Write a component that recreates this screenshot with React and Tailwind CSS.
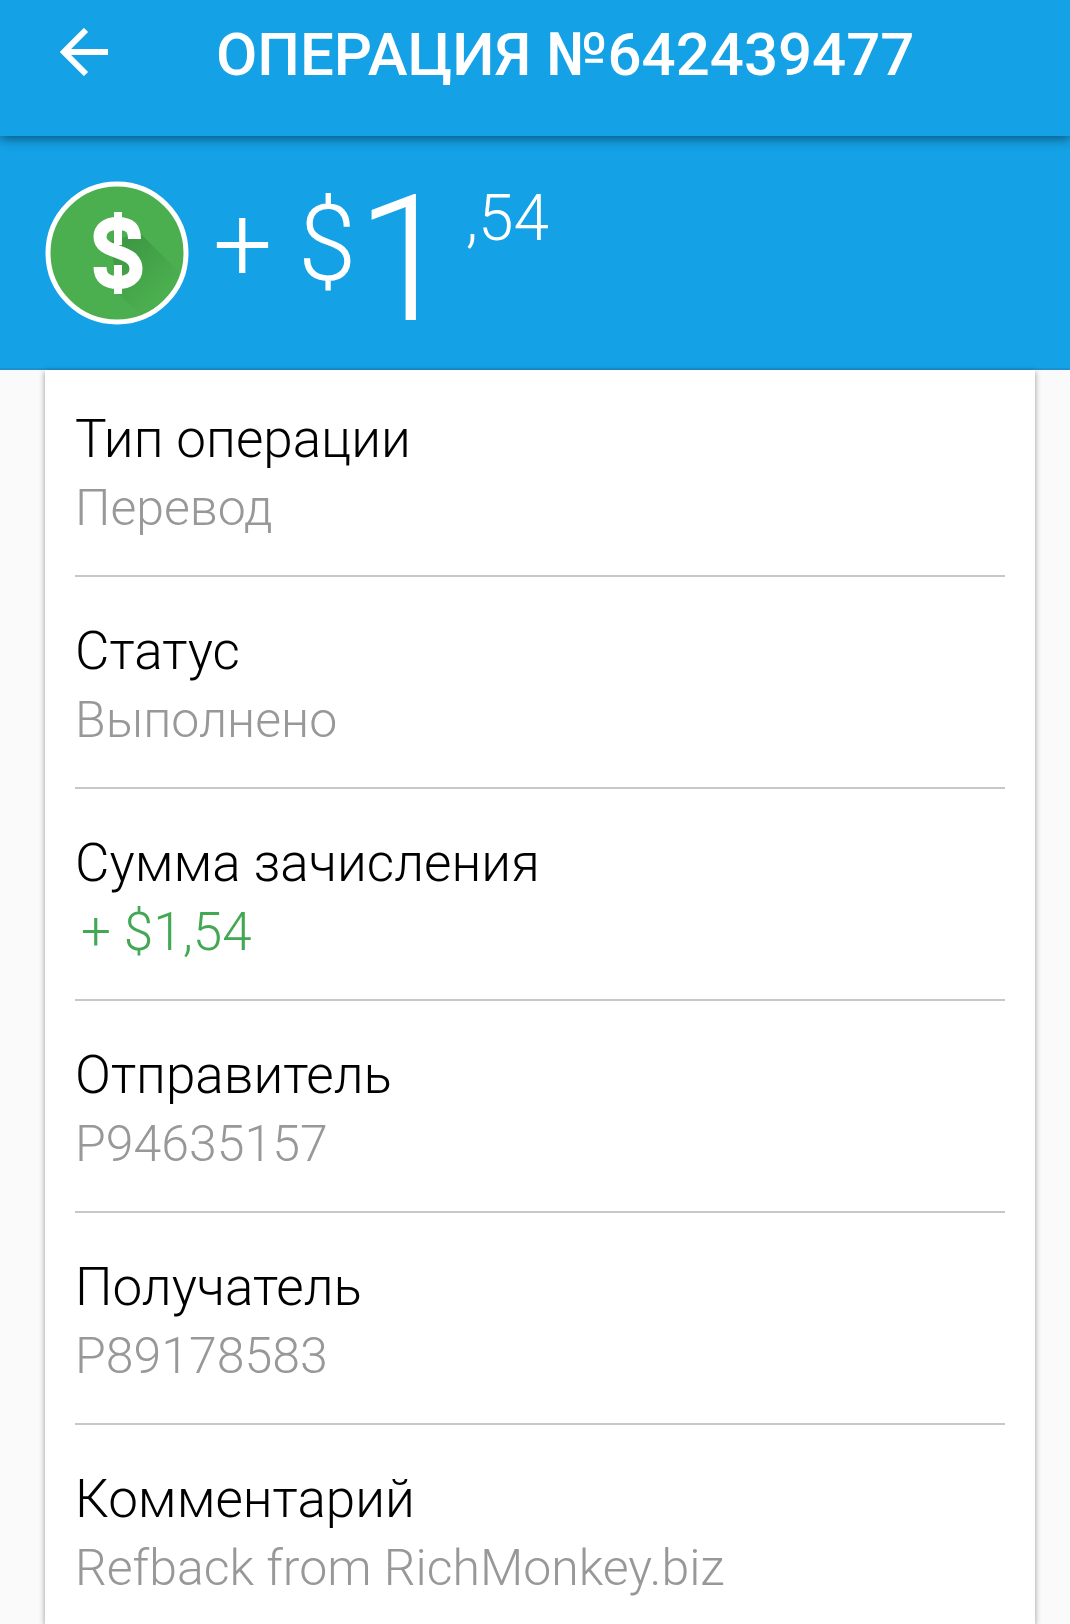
const rows = [
  ['Тип операции', 'Перевод'],
  ['Статус', 'Выполнено'],
  ['Сумма зачисления', '+ $1,54', true],
  ['Отправитель', 'P94635157'],
  ['Получатель', 'P89178583'],
  ['Комментарий', 'Refback from RichMonkey.biz'],
];

function DollarBadge() {
  return (
    <svg viewBox="0 0 144 144" className="size-36 shrink-0" aria-hidden="true">
      <defs>
        <linearGradient id="cast" gradientUnits="userSpaceOnUse" x1="76" y1="72" x2="116" y2="116">
          <stop offset="0" stopColor="#3f9a44" />
          <stop offset="1" stopColor="#4baf4f" />
        </linearGradient>
      </defs>
      <circle cx="72" cy="72" r="69" fill="#4baf4f" />
      <path d="M95 52L137 94A69 69 0 0 1 98 136L72 112L66 60Z" fill="url(#cast)" />
      <circle cx="72" cy="72" r="69" fill="none" stroke="#fff" strokeWidth="5" />
      <g fill="none" stroke="#fff">
        <path d="M89.500 58C89.500 46 83 42.500 72.500 42.500C61 42.500 55 48 55 56C55 74 91 67 91 88C91 97 83 101.500 73 101.500C62 101.500 55 97 55 86" strokeWidth="13" />
        <path d="M73 31V64M73 84V113" strokeWidth="8" />
      </g>
    </svg>
  );
}

export default function App() {
  return (
    <div className="flex min-h-screen flex-col bg-[#fafafa] font-['Roboto',sans-serif]">
      <header className="z-10 flex h-[136px] items-start bg-[#14a1e6] px-[60px] pt-4 text-white shadow-[0_3px_10px_rgba(0,0,0,0.45)]">
        <button type="button" aria-label="Назад" className="mt-3 w-[156px] shrink-0">
          <svg viewBox="0 0 48 48" className="size-12" fill="none" stroke="currentColor" strokeWidth="6">
            <path d="M48 24H5M26 2L4 24L26 46" />
          </svg>
        </button>
        <h1 className="whitespace-nowrap text-[60px] leading-[78px] font-medium">ОПЕРАЦИЯ №642439477</h1>
      </header>
      <section className="flex h-[234px] items-start border-b-2 border-[#1a92d2] bg-[#14a1e6] px-[45px] pt-[45px] font-light text-white">
        <DollarBadge />
        <p className="ml-6 flex items-start whitespace-pre">
          <span className="text-[105px] leading-[128px]">+ $</span>
          <span className="text-[176px] leading-[158px]">1</span>
          <span className="ml-3 text-[64px] leading-[75px]">,54</span>
        </p>
      </section>
      <main className="mr-[35px] ml-[45px] flex-1 bg-white px-[30px] shadow-[0_2px_6px_rgba(0,0,0,0.4)]">
        <dl>
          {rows.map(([label, value, green]) => (
            <div key={label} className="h-[212px] border-b-2 border-[#c8c8c8] pt-[42px] first:h-[207px] first:pt-[37px] last:h-auto last:border-0">
              <dt className="text-[53px] leading-[64px] font-light text-black">{label}</dt>
              <dd className={green ? 'pl-1.5 text-[53px] leading-[74px] font-light text-[#43a853]' : 'text-[50px] leading-[74px] font-light text-[#989898]'}>{value}</dd>
            </div>
          ))}
        </dl>
      </main>
    </div>
  );
}
